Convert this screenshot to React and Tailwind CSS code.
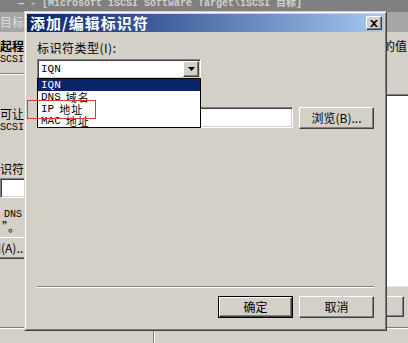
const cjk = "font-['Noto_Sans_CJK_SC',sans-serif]";
const mono = "font-['Liberation_Mono','Noto_Sans_CJK_SC',monospace]";

// classic 3d bevels
const raised =
  "border border-t-white border-l-white border-r-[#404040] border-b-[#404040] shadow-[inset_-1px_-1px_#808080,inset_1px_1px_#d4d0c8]";
const sunken =
  "border border-t-[#808080] border-l-[#808080] border-r-white border-b-white shadow-[inset_1px_1px_#404040,inset_-1px_-1px_#d4d0c8]";

function Button({ children, isDefault }) {
  if (isDefault) {
    return (
      <div className="w-[75px] h-[22px] border border-black">
        <div className={`w-full h-full bg-[#d4d0c8] flex items-center justify-center text-[12px] text-black ${raised}`}>
          {children}
        </div>
      </div>
    );
  }
  return (
    <div className={`w-[75px] h-[22px] bg-[#d4d0c8] flex items-center justify-center text-[12px] text-black ${raised}`}>
      {children}
    </div>
  );
}

function BackgroundWindow() {
  return (
    <div className="flex flex-col h-full">
      {/* inactive title bar */}
      <div className="h-[12px] bg-[#808080] overflow-hidden">
        <div className={`${mono} text-[10px] font-bold leading-[14px] -mt-[3px] pl-[18px] text-[#d4d0c8] whitespace-nowrap`}>
          — - [Microsoft iSCSI Software Target\iSCSI 目标]
        </div>
      </div>
      <div className="h-[20px] bg-[#a6a6a6] overflow-hidden">
        <div className={`${cjk} text-[12px] leading-[20px] text-[#dedede] whitespace-nowrap`}>目标</div>
      </div>

      <div className="flex-1 flex min-h-0">
        {/* left strip, the rest hides under the dialog */}
        <div className={`w-[24px] shrink-0 overflow-hidden flex flex-col ${cjk} text-black`}>
          <div className="mt-[6px] -ml-[12px] text-[12px] leading-[16px] font-bold whitespace-nowrap">发起程序</div>
          <div className={`${mono} -ml-[6px] text-[10px] leading-[12px] whitespace-nowrap`}>iSCSI 发起程序</div>
          <div className="mt-[7px] h-[2px] w-[60px] border-t border-t-[#808080] border-b border-b-white" />
          <div className="mt-[31px] text-[12px] leading-[16px] whitespace-nowrap">可让</div>
          <div className={`${mono} -ml-[6px] text-[10px] leading-[12px] whitespace-nowrap`}>iSCSI 发起</div>
          <div className="mt-[27px] -ml-[12px] text-[12px] leading-[16px] whitespace-nowrap">标识符</div>
          <div className={`mt-[1px] h-[20px] w-[60px] shrink-0 bg-white ${sunken}`} />
          <div className={`${mono} mt-[11px] pl-[4px] text-[10px] leading-[12px] whitespace-nowrap`}>DNS 名</div>
          <div className="pl-[2px] text-[12px] leading-[12px] whitespace-nowrap">”。</div>
          <div className={`mt-[4px] -ml-[30px] w-[80px] h-[22px] shrink-0 bg-[#d4d0c8] ${raised} pl-[6px] flex items-center text-[12px] whitespace-nowrap`}>
            添加(A)...
          </div>
        </div>

        <div className="flex-1" />

        {/* right strip */}
        <div className={`w-[21px] shrink-0 overflow-hidden flex flex-col ${cjk} text-black`}>
          <div className="mt-[6px] -ml-[4px] text-[12px] leading-[16px] whitespace-nowrap">的值</div>
          <div className="mt-[40px] h-[193px] shrink-0 bg-white border-t border-t-[#808080] shadow-[inset_0_1px_#404040] border-b border-b-[#e8e8e8]" />
          <div className={`mt-[9px] -ml-[58px] w-[75px] h-[21px] shrink-0 bg-[#d4d0c8] ${raised}`} />
        </div>
      </div>

      {/* status bar */}
      <div className="h-[16px] shrink-0 border-t border-t-[#808080] shadow-[inset_0_1px_white] flex">
        <div className="w-[154px] border-r border-r-[#808080] shadow-[1px_0_white]" />
        <div className="flex-1" />
      </div>
    </div>
  );
}

function Dialog() {
  return (
    <div className="absolute left-[24px] top-[11px] w-[363px] h-[320px] bg-[#d4d0c8] border border-t-[#d4d0c8] border-l-[#d4d0c8] border-r-[#404040] border-b-[#404040] shadow-[inset_1px_1px_white,inset_-1px_-1px_#808080] p-[2px] flex flex-col">
      {/* title bar */}
      <div className="h-[18px] shrink-0 bg-gradient-to-r from-[#0a246a] to-[#a6caf0] flex items-center justify-between pl-[3px] pr-[2px]">
        <span className={`${cjk} text-[15px] leading-[18px] font-bold tracking-[1px] text-white whitespace-nowrap`}>
          添加/编辑标识符
        </span>
        <div className={`w-[16px] h-[14px] bg-[#d4d0c8] flex items-center justify-center ${raised}`}>
          <svg width="8" height="7" viewBox="0 0 8 7">
            <path d="M0 0h2l2 2 2-2h2L5 3.5 8 7H6L4 5 2 7H0l3-3.5z" fill="black" />
          </svg>
        </div>
      </div>

      {/* body */}
      <div className={`flex-1 flex flex-col px-[10px] pt-[8px] pb-[10px] ${cjk} text-black`}>
        <div className="text-[12px] leading-[16px] tracking-[0.5px]">标识符类型(I):</div>

        <div className={`relative mt-[3px] w-[164px] h-[20px] shrink-0 bg-white p-[1px] flex items-center ${sunken}`}>
          <span className={`${mono} flex-1 pl-[2px] text-[11px] leading-[16px]`}>IQN</span>
          <div className={`w-[16px] h-[16px] bg-[#d4d0c8] flex items-center justify-center ${raised}`}>
            <svg width="7" height="4" viewBox="0 0 7 4">
              <path d="M0 0h7L3.5 4z" fill="black" />
            </svg>
          </div>

          {/* open list */}
          <div className="absolute left-[-1px] top-[18px] w-[164px] h-[50px] bg-white border border-black z-10 flex flex-col">
            <div className="h-[12px] bg-[#0a246a] text-white pl-[3px] flex items-center">
              <span className={`${mono} text-[11px] leading-[12px]`}>IQN</span>
            </div>
            <div className="h-[12px] pl-[3px] flex items-center gap-[5px] whitespace-nowrap">
              <span className={`${mono} text-[11px] leading-[12px]`}>DNS</span>
              <span className="text-[11px] leading-[12px] tracking-[1px]">域名</span>
            </div>
            <div className="h-[12px] pl-[3px] flex items-center gap-[5px] whitespace-nowrap">
              <span className={`${mono} text-[11px] leading-[12px]`}>IP</span>
              <span className="text-[11px] leading-[12px] tracking-[1px]">地址</span>
            </div>
            <div className="h-[12px] pl-[3px] flex items-center gap-[5px] whitespace-nowrap">
              <span className={`${mono} text-[11px] leading-[12px]`}>MAC</span>
              <span className="text-[11px] leading-[12px] tracking-[1px]">地址</span>
            </div>
          </div>
        </div>

        <div className="mt-[28px] flex gap-[6px] items-start">
          <div className={`w-[256px] h-[21px] bg-white ${sunken}`} />
          <Button>浏览(B)...</Button>
        </div>

        <div className="flex-1" />

        <div className="h-[2px] border-t border-t-[#808080] border-b border-b-white" />
        <div className="mt-[8px] flex justify-end gap-[6px]">
          <Button isDefault>确定</Button>
          <Button>取消</Button>
        </div>
      </div>
    </div>
  );
}

export default function App() {
  return (
    <div className="relative w-[408px] h-[343px] overflow-hidden bg-[#d4d0c8]">
      <BackgroundWindow />
      <Dialog />
      {/* red annotation box over the IP item */}
      <div className="absolute left-[27px] top-[100px] w-[69px] h-[19px] border border-[#d83b3b] z-20" />
    </div>
  );
}
